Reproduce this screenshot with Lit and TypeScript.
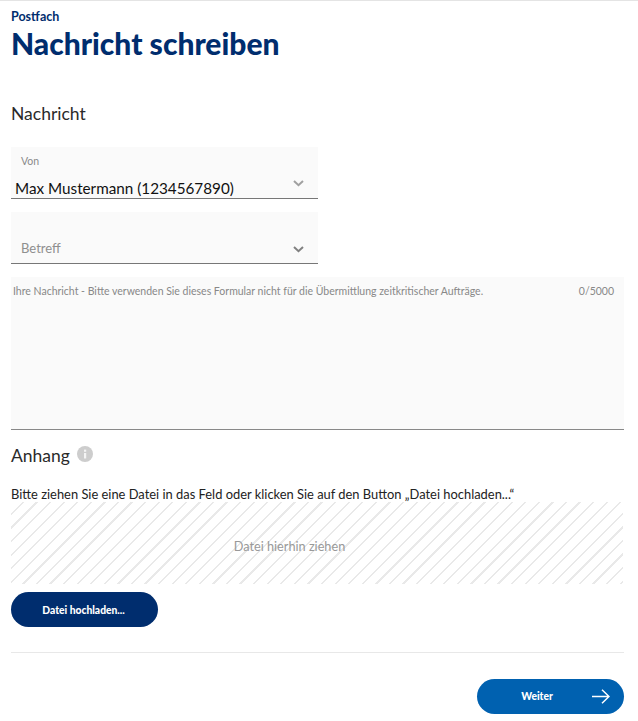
import { LitElement, html, css } from "lit";
import { customElement } from "lit/decorators.js";

const chevron = html`<svg class="chev" width="11" height="7" viewBox="0 0 11 7" fill="none" stroke-width="2"><path d="M1 1l4.5 4.2L10 1"/></svg>`;

@customElement("app-root")
export class AppRoot extends LitElement {
  static styles = css`
    :host {
      display: block;
      width: 638px;
      height: 721px;
      box-sizing: border-box;
      overflow: hidden;
      background: #fff;
      border-top: 1px solid #e4e4e4;
      font-family: Lato, "Noto Sans", sans-serif;
      color: #222;
    }
    .page { display: flex; flex-direction: column; padding: 0 14px 0 11px; }
    .crumb { margin-top: 9px; font-size: 12.5px; line-height: 14px; font-weight: 700; color: #002d6e; }
    h1 { margin: 1px 0 0; font-size: 30px; line-height: 36px; font-weight: 900; color: #002d6e; }
    h2 { margin: 0; font-size: 17.5px; line-height: 24px; font-weight: 400; color: #2a2a2a; }
    .sec1 { margin-top: 41px; }
    .field {
      width: 307px; height: 52px; box-sizing: border-box; margin-top: 13px;
      background: #fafafa; border-bottom: 1px solid #777;
      display: flex; flex-direction: column; position: relative;
    }
    .first { margin-top: 21px; }
    .label { font-size: 10.5px; line-height: 14px; color: #8a8a8a; padding: 7px 0 0 10px; }
    .value { font-size: 15.25px; line-height: 20px; color: #111; padding: 10px 0 0 4px; }
    .betreff { font-size: 13px; line-height: 16px; color: #8f8f8f; padding: 28px 0 0 10px; }
    .chev { position: absolute; right: 14px; bottom: 10px; stroke: #808080; }
    .first .chev { bottom: 11px; stroke: #a0a0a0; }
    .area {
      margin-top: 13px; height: 153px; box-sizing: border-box;
      background: #fafafa; border-bottom: 1px solid #888;
      display: flex; justify-content: space-between;
      font-size: 10.5px; line-height: 14px; color: #888; padding: 7px 10px 0 2px;
    }
    .att { margin-top: 14px; display: flex; align-items: center; gap: 7px; }
    .info { margin-top: -4px; }
    .hint { margin-top: 18px; font-size: 12.9px; line-height: 16px; color: #222; }
    .drop {
      margin-top: 0; height: 82px; width: 612px;
      background: repeating-linear-gradient(135deg, #fff 0 8px, #e9e9e9 8px 9.6px);
      display: flex; align-items: center; justify-content: center;
      font-size: 12.7px; color: #999; padding: 6px 55px 0 0; box-sizing: border-box;
    }
    .btn {
      height: 35px; border-radius: 18px; color: #fff; font-size: 10.3px; font-weight: 900;
      display: flex; align-items: center; justify-content: center; box-sizing: border-box;
    }
    .upload { margin-top: 8px; width: 147px; background: #002d6e; padding-right: 2px; }
    hr { margin: 25px 0 0; border: 0; border-top: 1px solid #e8e8e8; width: 613px; }
    .next {
      margin-top: 26px; margin-left: 466px; width: 147px; background: #0061b0; position: relative;
      padding: 0 27px 2px 0;
    }
    .next svg { position: absolute; right: 14px; top: 10px; }
  `;

  render() {
    return html`<div class="page">
      <div class="crumb">Postfach</div>
      <h1>Nachricht schreiben</h1>
      <h2 class="sec1">Nachricht</h2>
      <div class="field first">
        <div class="label">Von</div>
        <div class="value">Max Mustermann (1234567890)</div>
        ${chevron}
      </div>
      <div class="field">
        <div class="betreff">Betreff</div>
        ${chevron}
      </div>
      <div class="area">
        <span>Ihre Nachricht - Bitte verwenden Sie dieses Formular nicht für die Übermittlung zeitkritischer Aufträge.</span>
        <span>0/5000</span>
      </div>
      <div class="att">
        <h2>Anhang</h2>
        <svg class="info" width="16" height="16" viewBox="0 0 16 16"><circle cx="8" cy="8" r="8" fill="#cdcdcd"/><rect x="7" y="7" width="2.2" height="5.5" fill="#f4f4f4"/><rect x="7" y="3.6" width="2.2" height="2.2" fill="#f4f4f4"/></svg>
      </div>
      <div class="hint">Bitte ziehen Sie eine Datei in das Feld oder klicken Sie auf den Button „Datei hochladen...“</div>
      <div class="drop">Datei hierhin ziehen</div>
      <div class="btn upload">Datei hochladen...</div>
      <hr />
      <div class="btn next">Weiter
        <svg width="18" height="15" viewBox="0 0 18 15" fill="none" stroke="#fff" stroke-width="1.5"><path d="M0 7.5h17M10 .8l7 6.7-7 6.7"/></svg>
      </div>
    </div>`;
  }
}
